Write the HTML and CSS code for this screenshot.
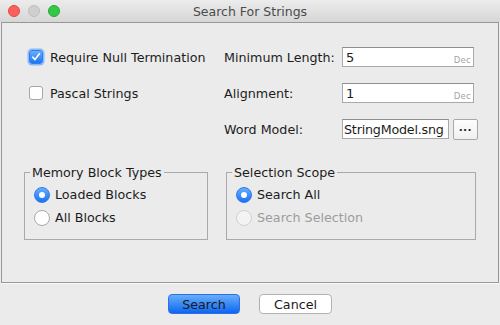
FILE: index.html
```html
<!DOCTYPE html>
<html lang="en">
  <head>
    <meta charset="UTF-8" />
    <meta name="viewport" content="width=device-width, initial-scale=1.0" />
    <title>Search For Strings</title>
    <link rel="stylesheet" href="styles.css">
  </head>
  <body>
    <div class="window">
      <div class="titlebar">
        <div class="lights">
          <span class="light close"></span>
          <span class="light minimize"></span>
          <span class="light zoom"></span>
        </div>
        <div class="title">Search For Strings</div>
      </div>

      <div class="panel">
        <div class="options">
          <label class="check">
            <span class="box checked">
              <svg width="10" height="10" viewBox="0 0 10 10">
                <path d="M1.8 5.2 L4 7.6 L8.4 1.8" fill="none" stroke="#fff" stroke-width="1.6" stroke-linecap="round" stroke-linejoin="round" />
              </svg>
            </span>
            Require Null Termination
          </label>
          <span class="field-label">Minimum Length:</span>
          <div class="input number"><span>5</span><span class="radix">Dec</span></div>

          <label class="check">
            <span class="box"></span>
            Pascal Strings
          </label>
          <span class="field-label">Alignment:</span>
          <div class="input number"><span>1</span><span class="radix">Dec</span></div>

          <span></span>
          <span class="field-label">Word Model:</span>
          <div class="model">
            <div class="input file">StringModel.sng</div>
            <button class="browse">&middot;&middot;&middot;</button>
          </div>
        </div>

        <div class="groups">
          <fieldset class="group memory">
            <legend>Memory Block Types</legend>
            <label class="radio"><span class="dot selected"></span>Loaded Blocks</label>
            <label class="radio"><span class="dot"></span>All Blocks</label>
          </fieldset>
          <fieldset class="group scope">
            <legend>Selection Scope</legend>
            <label class="radio"><span class="dot selected"></span>Search All</label>
            <label class="radio disabled"><span class="dot"></span>Search Selection</label>
          </fieldset>
        </div>
      </div>

      <div class="footer">
        <button class="btn primary">Search</button>
        <button class="btn">Cancel</button>
      </div>
    </div>
  </body>
</html>
```

FILE: styles.css
```css
:root {
  --bg-color: #ebebeb;
  --text-color: #1c1c1c;
  --border-color: #a3a3a3;
  --blue-top: #68aefb;
  --blue-bottom: #0d66f1;
}

* {
  box-sizing: border-box;
}

body {
  margin: 0;
  background-color: var(--bg-color);
  color: var(--text-color);
  font-family: "DejaVu Sans", sans-serif;
  font-size: 12.7px;
}

.window {
  width: 500px;
  height: 325px;
  overflow: hidden;
}

.titlebar {
  height: 22px;
  display: flex;
  align-items: center;
  position: relative;
  background: linear-gradient(#ececec, #d6d6d6);
  border-radius: 5px 5px 0 0;
}

.lights {
  display: flex;
  gap: 8px;
  padding-left: 8px;
}

.light {
  width: 12px;
  height: 12px;
  border-radius: 50%;
}

.close {
  background-color: #fc605b;
  border: 1px solid #de4a45;
}

.minimize {
  background-color: #cfcfcf;
  border: 1px solid #bdbdbd;
}

.zoom {
  background-color: #34c748;
  border: 1px solid #27aa35;
}

.title {
  position: absolute;
  left: 0;
  right: 0;
  text-align: center;
  font-size: 12.5px;
  color: #4b4b4b;
}

.panel {
  margin-left: 1px;
  width: 498px;
  height: 261px;
  border: 1px solid #979797;
  box-shadow: 0 1px 0 #fafafa;
  padding: 24px 0 0 22px;
}

.options {
  display: grid;
  grid-template-columns: 196px 118px 136px;
  grid-template-rows: repeat(3, 20px);
  row-gap: 16px;
  align-items: center;
  padding-left: 4px;
}

.check {
  display: flex;
  align-items: center;
  gap: 7px;
}

.box {
  width: 14px;
  height: 14px;
  margin-left: 1px;
  border-radius: 3px;
  border: 1px solid #a6a6a6;
  background-color: #fff;
  display: flex;
  align-items: center;
  justify-content: center;
}

.box.checked {
  border: 1px solid #2d7ff3;
  background: linear-gradient(var(--blue-top), #1e74f4);
  box-shadow: 0 0 0 1.5px #8ab8f8;
}

.input {
  height: 20px;
  background-color: #fff;
  border: 1px solid #a9a9a9;
  border-top-color: #8f8f8f;
  font-size: 13px;
}

.number {
  width: 132px;
  display: flex;
  justify-content: space-between;
  align-items: center;
  padding: 0 2px 0 3px;
}

.radix {
  align-self: flex-end;
  font-size: 8.5px;
  color: #a4a4a4;
  padding-bottom: 1px;
  letter-spacing: 0.3px;
}

.model {
  display: flex;
  gap: 4px;
  align-items: center;
}

.file {
  width: 107px;
  padding: 0 1px;
  font-size: 12.7px;
  letter-spacing: -0.2px;
  display: flex;
  align-items: center;
  white-space: nowrap;
  overflow: hidden;
}

.browse {
  width: 25px;
  height: 21px;
  padding: 0;
  font-size: 13px;
  font-weight: bold;
  line-height: 1;
  color: #222;
  background: linear-gradient(#fdfdfd, #f0f0f0);
  border: 1px solid #a8a8a8;
  border-radius: 2px;
}

.groups {
  display: flex;
  gap: 18px;
  margin-top: 26px;
}

.group {
  margin: 0;
  border: 1px solid #a9a9a9;
  padding: 3px 5px 10px;
}

.group legend {
  padding: 0 2px;
  line-height: 15px;
}

.memory {
  width: 184px;
}

.scope {
  width: 250px;
}

.radio {
  display: flex;
  align-items: center;
  gap: 5px;
  height: 23px;
  margin-left: 4px;
}

.dot {
  width: 16px;
  height: 16px;
  border-radius: 50%;
  border: 1px solid #a8a8a8;
  background-color: #fff;
  display: flex;
  align-items: center;
  justify-content: center;
}

.dot.selected {
  border: 1px solid #2a7cf2;
  background: linear-gradient(var(--blue-top), #1c71f3);
}

.dot.selected::after {
  content: "";
  width: 6px;
  height: 6px;
  border-radius: 50%;
  background-color: #fff;
}

.radio.disabled {
  color: #9c9c9c;
}

.radio.disabled .dot {
  background-color: #f3f3f3;
  border-color: #d0d0d0;
}

.footer {
  display: flex;
  justify-content: center;
  gap: 19px;
  padding-top: 11px;
}

.btn {
  width: 73px;
  height: 20px;
  padding: 0;
  font-family: "DejaVu Sans", sans-serif;
  font-size: 12.7px;
  color: #1a1a1a;
  background-color: #fff;
  border: 1px solid #b3b3b3;
  border-radius: 4px;
}

.btn.primary {
  width: 72px;
  background: linear-gradient(var(--blue-top), var(--blue-bottom));
  border-color: #2c6ee6;
}
```
